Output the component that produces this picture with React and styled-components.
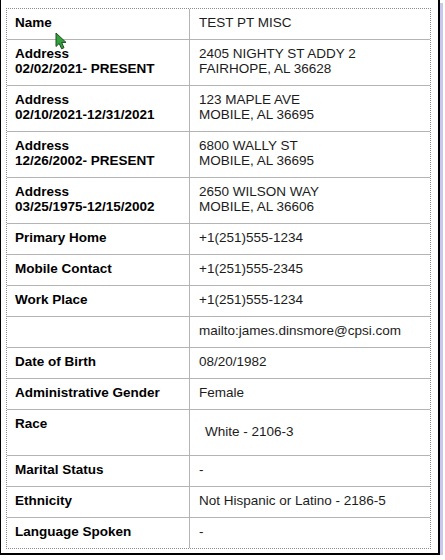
import styled, { createGlobalStyle } from 'styled-components';

const GlobalStyle = createGlobalStyle`
  html, body {
    margin: 0;
    padding: 0;
    background: #fff;
  }
  body {
    font-family: "Liberation Sans", Arial, sans-serif;
  }
`;

const rows = [
  { label: ['Name'], value: ['TEST PT MISC'] },
  { label: ['Address', '02/02/2021- PRESENT'], value: ['2405 NIGHTY ST ADDY 2', 'FAIRHOPE, AL 36628'] },
  { label: ['Address', '02/10/2021-12/31/2021'], value: ['123 MAPLE AVE', 'MOBILE, AL 36695'] },
  { label: ['Address', '12/26/2002- PRESENT'], value: ['6800 WALLY ST', 'MOBILE, AL 36695'] },
  { label: ['Address', '03/25/1975-12/15/2002'], value: ['2650 WILSON WAY', 'MOBILE, AL 36606'] },
  { label: ['Primary Home'], value: ['+1(251)555-1234'] },
  { label: ['Mobile Contact'], value: ['+1(251)555-2345'] },
  { label: ['Work Place'], value: ['+1(251)555-1234'] },
  { label: [], value: ['mailto:james.dinsmore@cpsi.com'] },
  { label: ['Date of Birth'], value: ['08/20/1982'] },
  { label: ['Administrative Gender'], value: ['Female'] },
  { label: ['Race'], value: ['White - 2106-3'], boxed: true },
  { label: ['Marital Status'], value: ['-'] },
  { label: ['Ethnicity'], value: ['Not Hispanic or Latino - 2186-5'] },
  { label: ['Language Spoken'], value: ['-'] },
];

function Lines({ items }) {
  return items.map((t, i) => <div key={i}>{t}</div>);
}

export default function App() {
  return (
    <>
      <GlobalStyle />
      <Frame>
        <Table>
          <tbody>
            {rows.map((r, i) => (
              <tr key={i}>
                <Label last={i === rows.length - 1}>
                  <Lines items={r.label} />
                </Label>
                <Value last={i === rows.length - 1}>
                  {r.boxed ? (
                    <Boxed>
                      <Lines items={r.value} />
                    </Boxed>
                  ) : (
                    <Lines items={r.value} />
                  )}
                </Value>
              </tr>
            ))}
          </tbody>
        </Table>
        <Cursor width="14" height="18" viewBox="0 0 14 18">
          <path
            d="M1 1 L1 14.5 L4.2 11.4 L6.6 16.8 L9 15.7 L6.6 10.4 L11 10.4 Z"
            fill="#34a23c"
            stroke="#1f4d22"
            strokeWidth="1"
            strokeLinejoin="round"
          />
        </Cursor>
      </Frame>
    </>
  );
}

const Frame = styled.div`
  position: relative;
  box-sizing: border-box;
  width: 440px;
  padding: 8px 7px 4px 5px;
  border-left: 1px solid #000;
  border-right: 2px solid #000;
  border-bottom: 2px solid #000;
  box-shadow: 3px 3px 0 #c8c8ee;
`;

const Table = styled.table`
  width: 425px;
  border-collapse: separate;
  border-spacing: 0;
  border: 1px dotted #8c8c8c;
  font-size: 13.5px;
  line-height: 15px;
`;

const Cell = styled.td`
  vertical-align: top;
  padding: 6px 8px 9px 8px;
  border-bottom: ${(p) => (p.last ? 'none' : '1px solid #b4b4b4')};
`;

const Label = styled(Cell)`
  width: 166px;
  font-weight: bold;
  color: #000;
  border-right: 1px solid #b4b4b4;
`;

const Value = styled(Cell)`
  padding-left: 9px;
  color: #1c1c1c;
  vertical-align: middle;
`;

const Boxed = styled.div`
  padding: 8px 6px 7px;
`;

const Cursor = styled.svg`
  position: absolute;
  left: 54px;
  top: 32px;
`;
